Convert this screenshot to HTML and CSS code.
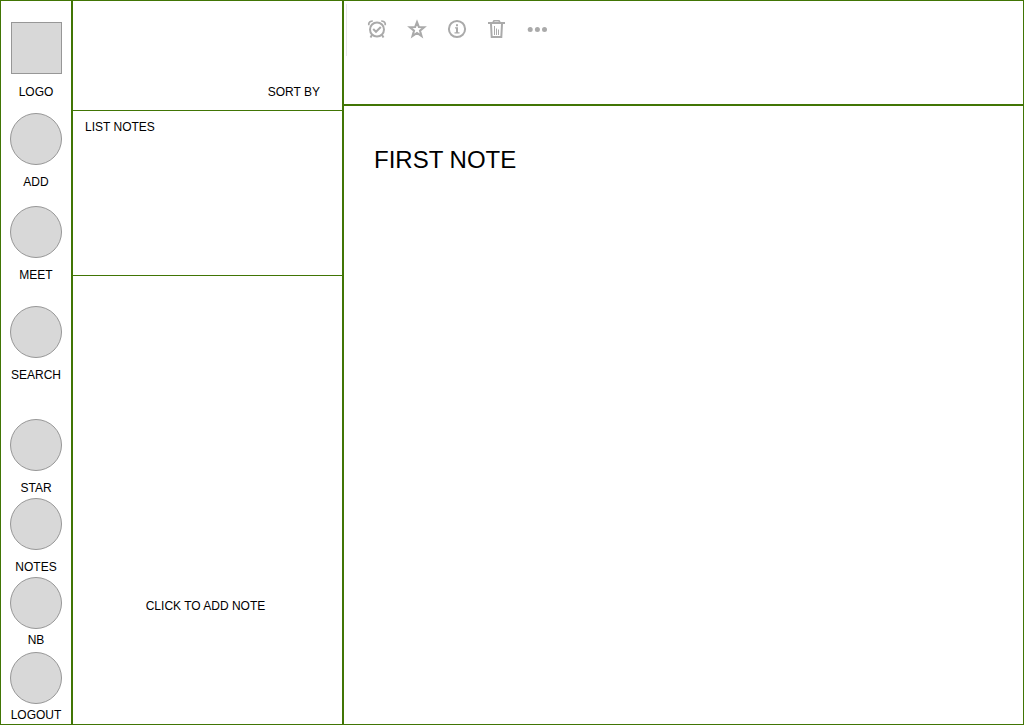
FILE: index.html
```html
<!DOCTYPE html>
<html lang="en">
<head>
<meta charset="utf-8">
<meta name="viewport" content="width=device-width, initial-scale=1">
<title>Notes</title>
<link rel="stylesheet" href="styles.css">
</head>
<body>
<div class="app">
  <nav class="sidebar">
    <a class="brand" href="#"><span class="brand-mark"></span>LOGO</a>
    <button class="nav-item" type="button"><span class="dot"></span>ADD</button>
    <button class="nav-item after-add" type="button"><span class="dot"></span>MEET</button>
    <button class="nav-item after-meet" type="button"><span class="dot"></span>SEARCH</button>
    <button class="nav-item new-group" type="button"><span class="dot"></span>STAR</button>
    <button class="nav-item snug" type="button"><span class="dot"></span>NOTES</button>
    <button class="nav-item snug tight" type="button"><span class="dot"></span>NB</button>
    <button class="nav-item last tight" type="button"><span class="dot"></span>LOGOUT</button>
  </nav>
  <section class="list">
    <header class="list-head"><button class="text-button" type="button">SORT BY</button></header>
    <div class="list-notes">LIST NOTES</div>
    <div class="list-foot"><button class="text-button" type="button">CLICK TO ADD NOTE</button></div>
  </section>
  <main class="note">
    <header class="note-head">
      <div class="toolbar">
        <button class="tool" type="button" aria-label="Reminder">
          <svg viewBox="0 0 20 20"><g fill="none" stroke="#aaa" stroke-width="2"><circle cx="10" cy="10.500" r="7"/><path d="M6.200 10l2.800 2.800 4.800-4.800"/><path d="M5 16l-1.500 2.500M15 16l1.500 2.500"/><path d="M1.800 6.200V4.500Q2.500 2 5.800 2M18.200 6.200V4.500Q17.500 2 14.200 2" stroke-width="1.700"/></g></svg>
        </button>
        <button class="tool" type="button" aria-label="Star">
          <svg viewBox="0 0 20 20"><path d="M10 3.200l1.900 4.900 5.200.2-4.100 3.400 1.500 5.300-4.500-3-4.500 3 1.500-5.300-4.100-3.400 5.200-.2z" fill="none" stroke="#aaa" stroke-width="2.100"/></svg>
        </button>
        <button class="tool" type="button" aria-label="Info">
          <svg viewBox="0 0 20 20"><circle cx="10" cy="10" r="8.100" fill="none" stroke="#aaa" stroke-width="2"/><path d="M9 5.200h2v2H9zM8 8.300h3v4.900h1.500v1.300h-5v-1.300H9V9.600H8z" fill="#aaa"/></svg>
        </button>
        <button class="tool" type="button" aria-label="Delete">
          <svg viewBox="0 0 20 20"><g fill="none" stroke="#aaa"><path d="M1 4h17" stroke-width="2"/><path d="M6 3.500L7 1.800h5l1 1.700" stroke-width="1.600"/><path d="M4 5l.7 13h9.600l.7-13" stroke-width="2"/><path d="M7.500 7v9M9.500 9.500V16M11.500 10.500V16" stroke-width="1"/></g></svg>
        </button>
        <button class="tool" type="button" aria-label="More">
          <svg viewBox="0 0 20 20"><g fill="#aaa"><circle cx="3.200" cy="10.500" r="2.500"/><circle cx="10.400" cy="10.500" r="2.500"/><circle cx="17.500" cy="10.500" r="2.500"/></g></svg>
        </button>
      </div>
    </header>
    <h1 class="note-title">FIRST NOTE</h1>
  </main>
</div>
</body>
</html>
```
FILE: styles.css
```css
* {
  box-sizing: border-box;
}

body {
  margin: 0;
  background: #fff;
  color: #000;
  font: 12px/14px "Liberation Sans", Arial, sans-serif;
}

button {
  margin: 0;
  padding: 0;
  border: 0;
  background: none;
  color: inherit;
  font: inherit;
  cursor: pointer;
}

.app {
  display: grid;
  grid-template-columns: 72px 271px 1fr;
  min-height: 100vh;
  border: 1px solid #417505;
}

.sidebar {
  display: flex;
  flex-direction: column;
  align-items: center;
  padding: 21px 0 2px;
  border-right: 2px solid #417505;
}

.brand,
.nav-item {
  display: flex;
  flex-direction: column;
  align-items: center;
  gap: 10px;
}

.brand {
  gap: 11px;
  color: inherit;
  text-decoration: none;
}

.brand-mark {
  width: 51px;
  height: 52px;
  border: 1px solid #979797;
  background: #d8d8d8;
}

.nav-item {
  margin-top: 14px;
}

.dot {
  width: 52px;
  height: 52px;
  border: 1px solid #979797;
  border-radius: 50%;
  background: #d8d8d8;
}

.after-add {
  margin-top: 17px;
}

.after-meet {
  margin-top: 24px;
}

.new-group {
  margin-top: 37px;
}

.snug {
  margin-top: 3px;
}

.last {
  margin-top: 5px;
}

.tight {
  gap: 4px;
}

.list {
  display: grid;
  grid-template-rows: 110px 165px 1fr;
  border-right: 2px solid #417505;
}

.list-head {
  display: flex;
  justify-content: flex-end;
  align-items: flex-end;
  padding: 0 22px 11px 12px;
  border-bottom: 1px solid #417505;
}

.list-notes {
  padding: 9px 12px;
  border-bottom: 1px solid #417505;
}

.list-foot {
  display: flex;
  justify-content: center;
  align-items: flex-end;
  padding: 0 16px 111px 12px;
}

.note-head {
  height: 105px;
  padding: 3px 0 0 2px;
  border-bottom: 2px solid #417505;
}

.toolbar {
  display: flex;
  gap: 20px;
  height: 52px;
  padding: 15px 20px;
  border-left: 1px solid #e6e6e6;
}

.tool,
.tool svg {
  display: block;
  width: 20px;
  height: 20px;
}

.note-title {
  margin: 0;
  padding: 40px 30px;
  font-size: 24px;
  font-weight: 400;
  line-height: 28px;
}
```
